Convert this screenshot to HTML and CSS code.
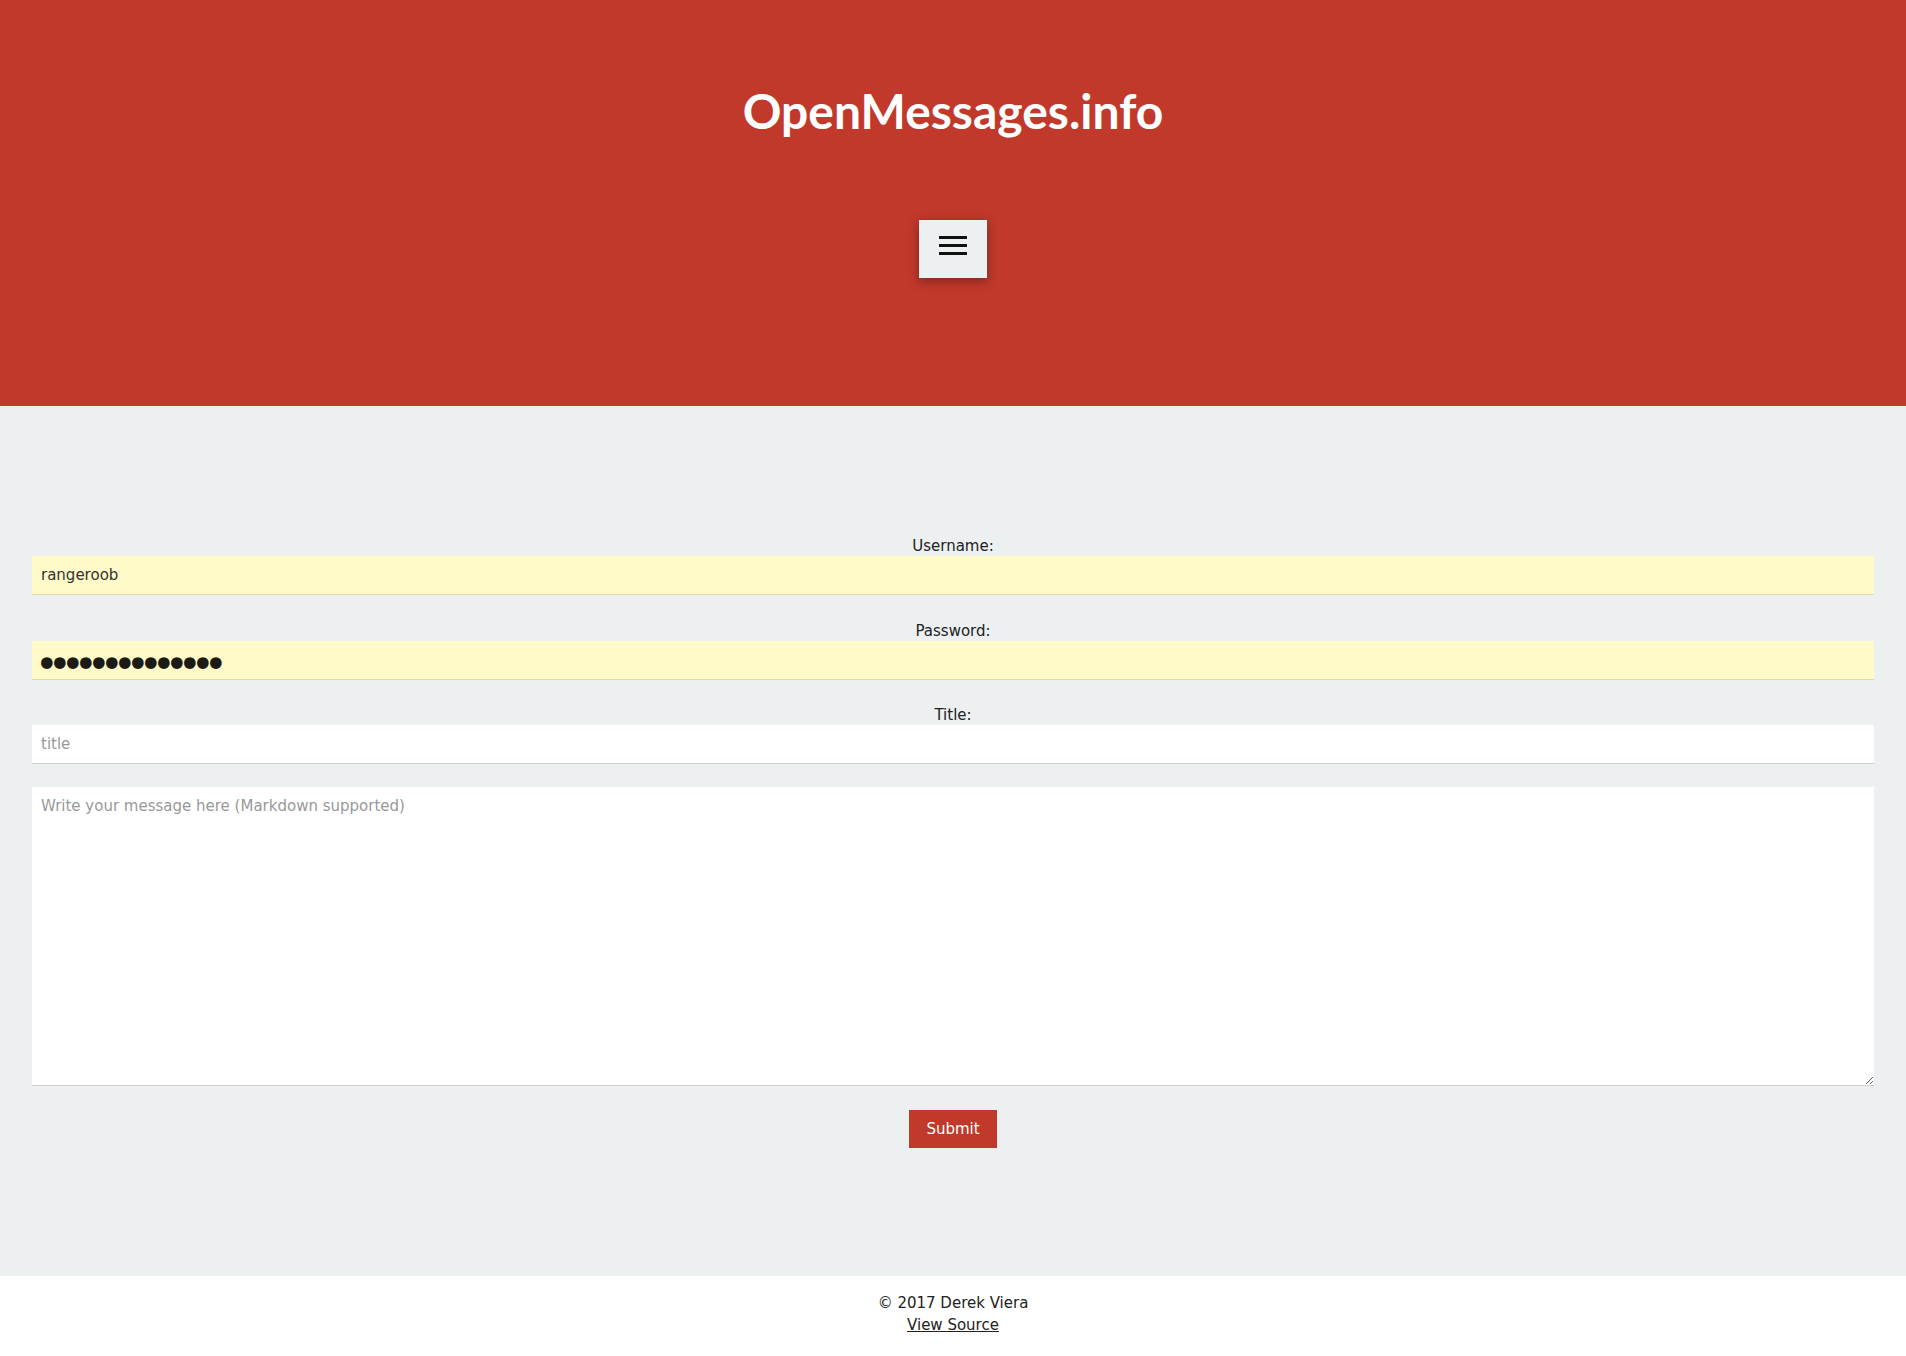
FILE: index.html
```html
<!DOCTYPE html>
<html lang="en">
<head>
<meta charset="utf-8">
<title>OpenMessages.info</title>
<link rel="stylesheet" href="styles.css">
</head>
<body>
<header class="site-header">
  <h1 class="site-title">OpenMessages.info</h1>
  <button class="menu-btn" type="button" aria-label="Menu">
    <svg class="menu-icon" width="28" height="19" viewBox="0 0 28 19" aria-hidden="true">
      <rect x="0" y="0" width="28" height="3"/>
      <rect x="0" y="8" width="28" height="3"/>
      <rect x="0" y="16" width="28" height="3"/>
    </svg>
  </button>
</header>
<main class="content">
  <form class="msg-form">
    <label class="field-label" for="username">Username:</label>
    <input class="field autofill" id="username" type="text" value="rangeroob">
    <label class="field-label" for="password">Password:</label>
    <input class="field autofill pw" id="password" type="password" value="aaaaaaaaaaaaaa">
    <label class="field-label" for="title">Title:</label>
    <input class="field" id="title" type="text" placeholder="title">
    <textarea class="message" placeholder="Write your message here (Markdown supported)"></textarea>
    <div class="actions">
      <button class="submit-btn" type="button">Submit</button>
    </div>
  </form>
</main>
<footer class="site-footer">
  <div class="copy">© 2017 Derek Viera</div>
  <a class="source-link" href="#">View Source</a>
</footer>
</body>
</html>
```
FILE: styles.css
```css
* { box-sizing: border-box; }
html, body { margin: 0; padding: 0; }
body {
  background: #ecf0f1;
  font-family: "DejaVu Sans", sans-serif;
  font-size: 15px;
  color: #222;
}
.site-header {
  background: #c0392b;
  height: 406px;
  padding-top: 82px;
  display: flex;
  flex-direction: column;
  align-items: center;
}
.site-title {
  margin: 0;
  font-family: Lato, "Liberation Sans", sans-serif;
  font-weight: 700;
  font-size: 48px;
  line-height: 58px;
  color: #fff;
}
.menu-btn {
  margin-top: 80px;
  width: 68px;
  height: 58px;
  border: none;
  background: #ecf0f1;
  box-shadow: 0 3px 10px rgba(0,0,0,0.35);
  display: flex;
  align-items: center;
  justify-content: center;
  padding: 0;
}
.menu-icon { fill: #111; margin-top: -8px; }
.content {
  padding: 130px 32px 128px;
}
.msg-form {
  display: flex;
  flex-direction: column;
}
.field-label {
  display: block;
  text-align: center;
  line-height: 18px;
  padding-top: 1px;
  margin-bottom: 1px;
}
.field {
  display: block;
  width: 100%;
  height: 39px;
  border: none;
  border-bottom: 1px solid #cfcfcf;
  background: #fff;
  padding: 0 9px;
  font-family: "DejaVu Sans", sans-serif;
  font-size: 15px;
  color: #333;
  outline: none;
  margin-bottom: 26px;
}
.field#title { margin-bottom: 23px; }
.field.autofill {
  background: #fffac8;
  border-bottom-color: #e6d9a6;
}
.field.pw {
  color: #1c1a14;
  font-size: 40px;
  letter-spacing: -10.6px;
  padding: 7px 0 0 3px;
  margin-bottom: 25px;
}
.field::placeholder, .message::placeholder { color: #999; }
.message {
  display: block;
  width: 100%;
  height: 299px;
  border: none;
  border-bottom: 1px solid #cfcfcf;
  background: #fff;
  padding: 10px 9px;
  font-family: "DejaVu Sans", sans-serif;
  font-size: 15px;
  line-height: 18px;
  color: #333;
  resize: vertical;
  outline: none;
  margin: 0 0 24px;
}
.actions { display: flex; justify-content: center; }
.submit-btn {
  width: 88px;
  height: 38px;
  border: none;
  background: #c0392b;
  color: #fff;
  font-family: "DejaVu Sans", sans-serif;
  font-size: 15px;
  padding: 0;
}
.site-footer {
  background: #fff;
  height: 80px;
  padding-top: 16px;
  text-align: center;
  line-height: 22px;
}
.copy { color: #222; }
.source-link { color: #222; text-decoration: underline; }
```
